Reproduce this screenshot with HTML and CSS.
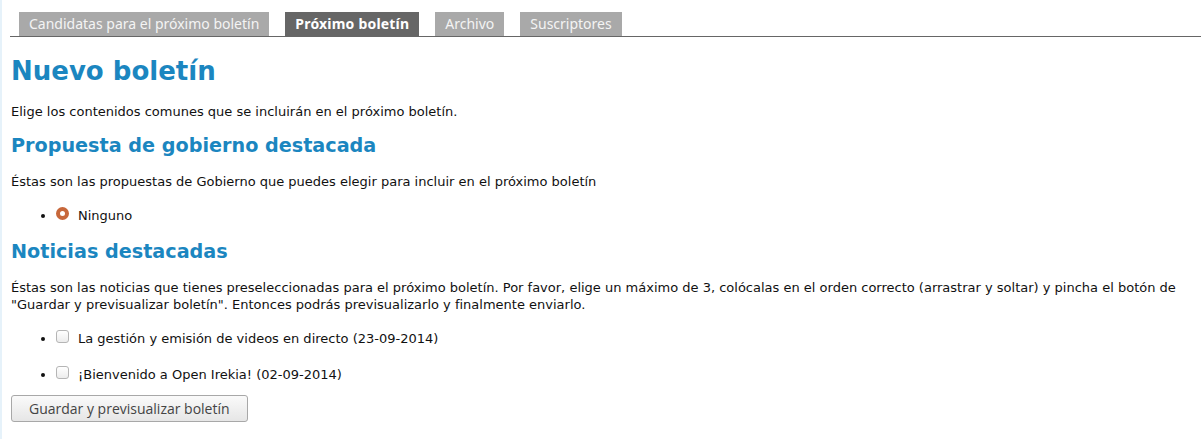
FILE: index.html
```html
<!DOCTYPE html>
<html lang="es">
<head>
<meta charset="utf-8">
<title>Nuevo boletín</title>
<link rel="stylesheet" href="styles.css">
</head>
<body>
<div class="page">
  <nav class="tabs">
    <a class="tab" href="#">Candidatas para el próximo boletín</a>
    <a class="tab active" href="#">Próximo boletín</a>
    <a class="tab" href="#">Archivo</a>
    <a class="tab" href="#">Suscriptores</a>
  </nav>
  <main class="content">
    <h1 class="title">Nuevo boletín</h1>
    <p class="text">Elige los contenidos comunes que se incluirán en el próximo boletín.</p>
    <h2 class="section">Propuesta de gobierno destacada</h2>
    <p class="text">Éstas son las propuestas de Gobierno que puedes elegir para incluir en el próximo boletín</p>
    <ul class="options">
      <li><label class="option"><span class="radio"></span>Ninguno</label></li>
    </ul>
    <h2 class="section">Noticias destacadas</h2>
    <p class="text">Éstas son las noticias que tienes preseleccionadas para el próximo boletín. Por favor, elige un máximo de 3, colócalas en el orden correcto (arrastrar y soltar) y pincha el botón de "Guardar y previsualizar boletín". Entonces podrás previsualizarlo y finalmente enviarlo.</p>
    <ul class="options news">
      <li><label class="option"><span class="check"></span>La gestión y emisión de videos en directo (23-09-2014)</label></li>
      <li><label class="option"><span class="check"></span>¡Bienvenido a Open Irekia! (02-09-2014)</label></li>
    </ul>
    <button class="btn" type="button">Guardar y previsualizar boletín</button>
  </main>
</div>
</body>
</html>
```

FILE: styles.css
```css
html, body {
  margin: 0;
  padding: 0;
  background: #fff;
}
body {
  font-family: "DejaVu Sans", Verdana, sans-serif;
  font-size: 13px;
  color: #111;
}
.page {
  border-left: 2px solid #e6f2fa;
  min-height: 439px;
  box-sizing: border-box;
  padding-left: 8px;
}
.tabs {
  display: flex;
  gap: 16px;
  padding: 12px 0 0 9px;
  border-bottom: 1px solid #666;
}
.tab {
  display: block;
  height: 24px;
  line-height: 24px;
  padding: 0 10px;
  background: #a9a9a9;
  color: #f4f4f4;
  font-family: "Noto Sans", "Open Sans", sans-serif;
  font-size: 14px;
  text-decoration: none;
}
.tab.active {
  background: #666;
  color: #fff;
  font-weight: bold;
  letter-spacing: 0.2px;
}
.content {
  padding: 0 10px 0 1px;
}
.title {
  margin: 19px 0 0;
  font-size: 26px;
  line-height: 30px;
  color: #1b86c0;
  font-weight: bold;
}
.section {
  margin: 15px 0 0;
  font-size: 19.2px;
  line-height: 22px;
  color: #1b86c0;
  font-weight: bold;
}
.text {
  margin: 17px 0 0;
  line-height: 17px;
}
.section + .text {
  margin-top: 16px;
}
.title + .text {
  margin-top: 17px;
}
.options {
  margin: 17px 0 0;
  padding-left: 45px;
}
.options + .section {
  margin-top: 17px;
}
.options li {
  margin: 0;
  line-height: 17px;
}
.news li + li {
  margin-top: 19px;
}
.option {
  display: inline;
}
.radio,
.check {
  display: inline-block;
  width: 13px;
  height: 13px;
  box-sizing: border-box;
  margin-right: 9px;
  vertical-align: 0;
}
.radio {
  border-radius: 50%;
  border: 4px solid #c7673a;
  background: #fff;
}
.check {
  border-radius: 3px;
  border: 1px solid #b5b5b5;
  background: linear-gradient(#fff, #ececec);
}
.btn {
  display: block;
  margin-top: 12px;
  height: 27px;
  padding: 0 17px;
  border: 1px solid #a8a8a8;
  border-radius: 3px;
  background: linear-gradient(#fafafa, #e6e6e6);
  color: #444;
  font-family: "Open Sans", "Noto Sans", sans-serif;
  font-size: 14px;
}
```
